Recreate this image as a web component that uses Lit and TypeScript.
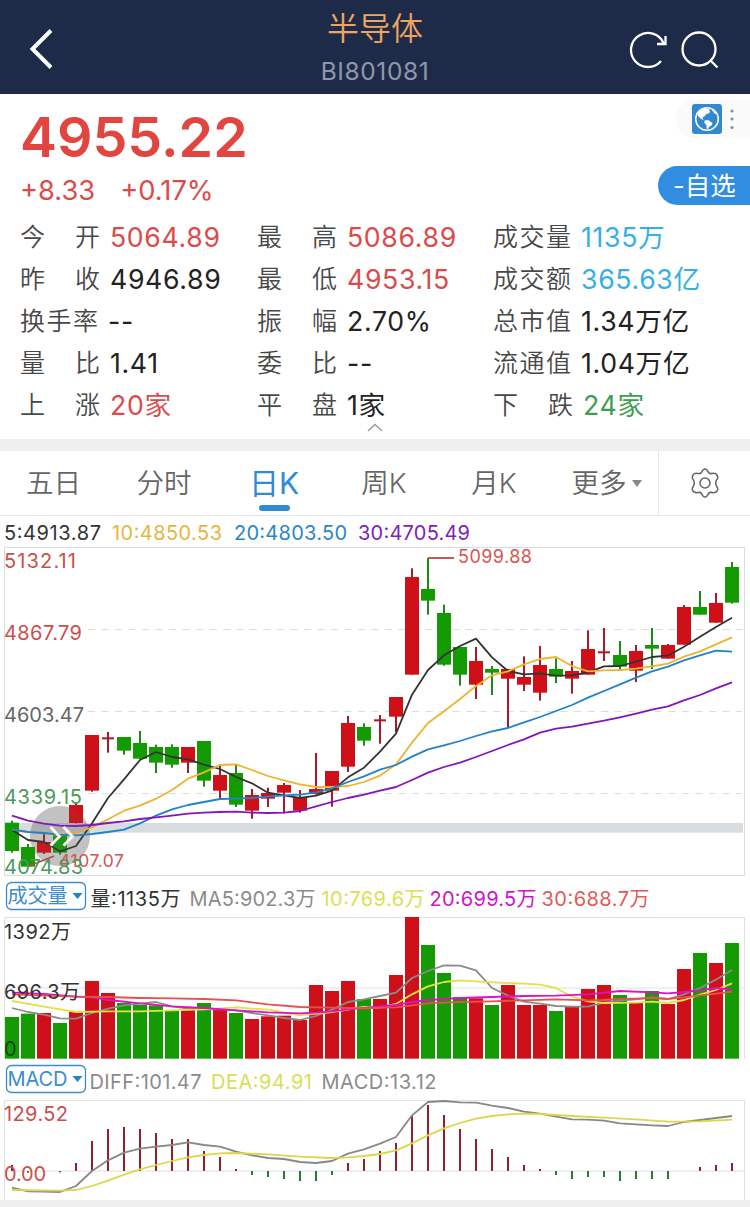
import { LitElement, html, svg, css } from "lit";
import { customElement } from "lit/decorators.js";

type Pt = [number, number];
const X = (i: number) => 12 + 16 * i;
const RED = "#d01018";
const GREEN = "#149b04";

// colour, open/close edges, high, low: thirds of a pixel from the chart top
const CANDLES: [string, number, number, number, number][] = [
  ["g", 908, 993, 902, 998], ["g", 981, 1040, 972, 1042], ["r", 966, 998, 942, 1002],
  ["g", 946, 998, 942, 1004], ["r", 855, 909, 848, 910], ["r", 645, 812, 645, 815],
  ["r", 652, 656, 636, 698], ["g", 651, 692, 651, 704], ["g", 669, 716, 633, 718],
  ["g", 681, 728, 674, 759], ["g", 681, 734, 673, 743], ["r", 681, 728, 681, 759],
  ["g", 663, 782, 663, 800], ["r", 765, 812, 733, 836], ["g", 759, 854, 735, 861],
  ["r", 825, 872, 807, 896], ["r", 819, 836, 803, 861], ["r", 795, 818, 789, 880],
  ["r", 832, 872, 810, 878], ["r", 807, 822, 699, 824], ["r", 753, 812, 753, 860],
  ["r", 609, 740, 588, 756], ["g", 621, 662, 610, 677], ["r", 598, 602, 585, 671],
  ["r", 531, 590, 531, 636], ["r", 171, 464, 145, 464], ["g", 207, 242, 114, 284],
  ["g", 279, 434, 254, 437], ["g", 381, 464, 381, 497], ["r", 423, 494, 381, 537],
  ["g", 447, 458, 438, 525], ["r", 447, 476, 447, 622], ["r", 471, 494, 409, 513],
  ["r", 435, 518, 378, 542], ["g", 447, 470, 415, 489], ["r", 453, 476, 423, 521],
  ["r", 387, 464, 331, 464], ["r", 394, 398, 324, 423], ["g", 405, 440, 363, 452],
  ["r", 393, 452, 375, 486], ["g", 375, 386, 324, 447], ["r", 375, 416, 372, 416],
  ["r", 261, 374, 255, 374], ["g", 261, 284, 213, 284], ["r", 249, 308, 219, 308],
  ["g", 141, 248, 126, 251],
];

const VOLUMES = [
  411, 401, 399, 429, 396, 303, 339, 369, 375, 376, 390, 390, 369, 386, 399, 417,
  409, 407, 420, 315, 333, 303, 357, 357, 285, 111, 195, 279, 352, 355, 375, 315,
  375, 375, 393, 378, 327, 315, 345, 366, 333, 372, 267, 219, 249, 189,
];

const MACD = [
  855, 878, 873, 877, 849, 783, 747, 741, 747, 759, 777, 777, 813, 831, 867, 885,
  891, 897, 903, 903, 885, 849, 837, 813, 789, 709, 675, 705, 747, 777, 807, 831,
  855, 867, 885, 897, 891, 891, 903, 897, 897, 897, 873, 861, 855, 849,
];

const P5: Pt[] = [[0, 930], [1, 960], [2, 966], [3, 994], [4, 978], [5, 910], [6, 834], [7, 778], [8, 720], [9, 696], [10, 711], [11, 718], [12, 734], [13, 747], [14, 771], [15, 790], [16, 818], [17, 826], [18, 834], [19, 827], [20, 812], [21, 772], [22, 743], [23, 695], [24, 641], [25, 524], [26, 450], [27, 406], [28, 378], [29, 356], [30, 412], [31, 453], [32, 463], [33, 460], [34, 467], [35, 466], [36, 457], [37, 439], [38, 438], [39, 425], [40, 411], [41, 407], [42, 380], [43, 350], [44, 321], [45, 293]];
const P10: Pt[] = [[0, 928], [1, 936], [2, 940], [3, 944], [4, 939], [5, 922], [6, 898], [7, 872], [8, 857], [9, 836], [10, 810], [11, 776], [12, 757], [13, 735], [14, 733], [15, 750], [16, 768], [17, 781], [18, 793], [19, 801], [20, 801], [21, 798], [22, 786], [23, 767], [24, 733], [25, 668], [26, 609], [27, 574], [28, 537], [29, 498], [30, 466], [31, 454], [32, 433], [33, 417], [34, 411], [35, 438], [36, 454], [37, 451], [38, 450], [39, 446], [40, 439], [41, 431], [42, 410], [43, 394], [44, 373], [45, 352]];
const P20: Pt[] = [[0, 928], [1, 936], [2, 939], [3, 944], [4, 946], [5, 942], [6, 936], [7, 929], [8, 910], [9, 887], [10, 868], [11, 855], [12, 846], [13, 837], [14, 836], [15, 834], [16, 830], [17, 826], [18, 824], [19, 817], [20, 805], [21, 786], [22, 769], [23, 749], [24, 735], [25, 710], [26, 688], [27, 676], [28, 663], [29, 648], [30, 634], [31, 624], [32, 607], [33, 591], [34, 573], [35, 555], [36, 533], [37, 513], [38, 493], [39, 473], [40, 454], [41, 440], [42, 421], [43, 406], [44, 392], [45, 395]];
const P30: Pt[] = [[0, 887], [1, 902], [2, 911], [3, 917], [4, 918], [5, 915], [6, 909], [7, 904], [8, 897], [9, 892], [10, 887], [11, 881], [12, 878], [13, 876], [14, 875], [15, 878], [16, 879], [17, 878], [18, 873], [19, 859], [20, 846], [21, 834], [22, 824], [23, 812], [24, 801], [25, 780], [26, 758], [27, 741], [28, 728], [29, 711], [30, 693], [31, 675], [32, 658], [33, 638], [34, 626], [35, 620], [36, 611], [37, 602], [38, 592], [39, 581], [40, 569], [41, 559], [42, 541], [43, 525], [44, 505], [45, 487]];

const V5: Pt[] = [[0, 384], [1, 396], [2, 404], [3, 415], [4, 416], [5, 399], [6, 386], [7, 376], [8, 371], [9, 366], [10, 379], [11, 386], [12, 388], [13, 387], [14, 391], [15, 399], [16, 406], [17, 414], [18, 420], [19, 408], [20, 389], [21, 366], [22, 358], [23, 348], [24, 338], [25, 294], [26, 273], [27, 256], [28, 257], [29, 271], [30, 324], [31, 347], [32, 365], [33, 371], [34, 378], [35, 380], [36, 380], [37, 368], [38, 362], [39, 358], [40, 352], [41, 357], [42, 343], [43, 324], [44, 299], [45, 270]];
const V10: Pt[] = [[0, 363], [2, 380], [4, 396], [6, 394], [8, 394], [10, 391], [12, 388], [14, 382], [16, 389], [18, 406], [20, 396], [22, 381], [23, 382], [24, 372], [25, 343], [26, 319], [27, 306], [28, 301], [30, 307], [32, 311], [33, 314], [34, 324], [35, 350], [36, 364], [37, 369], [39, 368], [40, 365], [41, 369], [42, 360], [43, 344], [44, 330], [45, 310]];
const V20: Pt[] = [[0, 338], [2, 342], [4, 350], [5, 352], [6, 360], [8, 370], [10, 379], [12, 384], [14, 391], [16, 397], [18, 400], [19, 398], [20, 394], [21, 388], [22, 384], [24, 375], [25, 366], [26, 360], [28, 354], [30, 351], [32, 348], [34, 347], [36, 343], [38, 333], [40, 337], [41, 340], [42, 336], [43, 331], [44, 324], [45, 330]];
const V30: Pt[] = [[0, 343], [2, 347], [4, 350], [6, 351], [8, 354], [10, 355], [12, 357], [14, 361], [16, 373], [18, 381], [20, 383], [22, 385], [24, 382], [26, 370], [28, 366], [30, 364], [32, 361], [34, 358], [36, 361], [37, 360], [38, 357], [39, 356], [40, 354], [41, 357], [42, 352], [43, 346], [44, 341], [45, 335]];

const DIFF: Pt[] = [[0, 923], [1, 934], [2, 935], [3, 936], [4, 918], [5, 873], [6, 841], [7, 818], [8, 806], [9, 800], [10, 795], [11, 787], [12, 795], [13, 800], [14, 815], [15, 826], [16, 834], [17, 837], [18, 846], [19, 849], [20, 843], [21, 821], [22, 808], [23, 791], [24, 771], [25, 706], [26, 666], [27, 663], [28, 667], [29, 668], [30, 677], [31, 684], [32, 695], [33, 701], [34, 710], [35, 718], [36, 719], [37, 722], [38, 730], [39, 733], [40, 736], [41, 738], [42, 726], [43, 720], [44, 714], [45, 708]];
const DEA: Pt[] = [[0, 930], [3, 932], [4, 930], [5, 918], [6, 902], [7, 884], [8, 868], [9, 855], [10, 843], [11, 832], [12, 825], [13, 820], [14, 819], [16, 823], [18, 830], [20, 834], [21, 832], [22, 828], [23, 822], [24, 811], [25, 790], [26, 766], [27, 745], [28, 729], [29, 716], [30, 708], [31, 703], [32, 701], [33, 702], [35, 708], [37, 713], [39, 718], [41, 725], [43, 724], [45, 719]];

const line = (pts: Pt[], color: string, w = 1.8) =>
  svg`<polyline fill="none" stroke=${color} stroke-width=${w} stroke-linejoin="round"
    points=${pts.map(([i, y]) => `${X(i)},${(y / 3).toFixed(2)}`).join(" ")} />`;

const label = (x: number, y: number, w: number, color: string, text: string, size = 20) =>
  svg`<text x=${x} y=${y} textLength=${w} fill=${color} font-size=${size}>${text}</text>`;

@customElement("app-root")
export class AppRoot extends LitElement {
  static styles = css`
    :host {
      display: flex;
      flex-direction: column;
      width: 750px;
      height: 1207px;
      overflow: hidden;
      background: #fff;
      color: #222;
      font-family: Inter, "Noto Sans CJK SC", sans-serif;
      font-size: 25px;
    }
    * { box-sizing: border-box; }
    svg { display: block; flex: none; }
    svg text { font-family: Inter, "Noto Sans CJK SC", sans-serif; font-weight: 400; }
    .header {
      display: grid;
      grid-template-columns: 1fr 140px 1fr;
      height: 94px;
      flex: none;
      background: #1d2b49;
    }
    .back { padding: 28px 0 0 28px; }
    .title { display: flex; flex-direction: column; align-items: center; padding-top: 9px; }
    .name { font-size: 32px; line-height: 40px; color: #efa45f; font-weight: 350; white-space: nowrap; }
    .code { font-size: 24.5px; line-height: 30px; margin-top: 7px; color: #8f98aa; letter-spacing: 0.6px; white-space: nowrap; }
    .tools { display: flex; justify-content: flex-end; gap: 12px; padding: 30px 31px 0 0; }
    .quote { display: flex; justify-content: space-between; height: 121px; flex: none; }
    .price { padding: 11px 0 0 20px; color: #e2453f; }
    .last { font-size: 55.5px; font-weight: 600; line-height: 64px; letter-spacing: 0; }
    .change { display: flex; gap: 25px; font-size: 27.3px; line-height: 36px; margin-top: 4px; color: #dc4b49; }
    .side { display: flex; flex-direction: column; align-items: flex-end; }
    .mini {
      display: flex; align-items: center; gap: 8px;
      width: 74px; height: 38px; margin-top: 6px; padding-left: 16px;
      border-radius: 19px 0 0 19px; background: #fafafa;
    }
    .fav {
      width: 92px; height: 39px; margin-top: 28px; padding-left: 15px;
      border-radius: 20px 0 0 20px; background: #318de0; color: #fff;
      font-size: 25.5px; line-height: 39px; white-space: nowrap; font-weight: 370;
    }
    .stats {
      display: grid;
      grid-template-columns: 237px 236px 1fr;
      grid-auto-rows: 42px;
      height: 224px;
      flex: none;
      padding: 1px 0 0 20px;
    }
    .cell { display: flex; align-items: center; white-space: nowrap; line-height: 42px; }
    .key {
      display: flex; justify-content: space-between;
      width: 80px; margin-right: 10px; color: #484848; font-weight: 350;
    }
    .key.full { width: 78px; }
    .val { font-size: 26.700px; letter-spacing: 0.65px; font-weight: 400; }
    .up { color: #dc4b49; }
    .down { color: #3f9e50; }
    .blue { color: #35b0e4; }
    .fold { grid-column: 1 / -1; display: flex; justify-content: center; height: 10px; padding-right: 21px; margin-top: -3px; }
    .gap { height: 12px; flex: none; background: #efefef; }
    .tabs { display: flex; height: 65px; flex: none; border-bottom: 1px solid #e6e6e6; color: #666; font-size: 27.600px; }
    .tab {
      display: flex; flex-direction: column; align-items: center;
      width: 110px; padding-top: 12px; line-height: 40px; white-space: nowrap; font-weight: 350;
    }
    .tab:first-child { width: 109px; padding-right: 2px; }
    .tab.on { color: #318ad2; font-size: 30px; font-weight: 400; }
    .mark { width: 31px; height: 6px; margin-top: 2px; border-radius: 3px; background: #318ad2; }
    .more { flex-direction: row; align-items: flex-start; justify-content: center; gap: 5px; width: 109px; padding-left: 6px; }
    .more svg { margin-top: 17px; }
    .gear { display: flex; flex: 1; justify-content: center; padding-top: 17px; border-left: 1px solid #e6e6e6; }
    .charts { flex: none; height: 684px; }
    .foot { height: 7px; flex: none; background: #efefef; }
  `;

  private row(k1: string, v1: string, c1: string, k2: string, v2: string, c2: string, k3: string, v3: string, c3: string) {
    const cell = (k: string, v: string, c: string) => html`
      <div class="cell">
        <span class="key ${k.length > 2 ? "full" : ""}">${[...k].map((ch) => html`<span>${ch}</span>`)}</span>
        <span class="val ${c}">${v}</span>
      </div>`;
    return html`${cell(k1, v1, c1)}${cell(k2, v2, c2)}${cell(k3, v3, c3)}`;
  }

  private priceChart() {
    return svg`
      <g transform="translate(0,4)">
        <g stroke="#dcdcdc" fill="none">
          <rect x="4.5" y="27.5" width="740" height="328" />
          <path stroke-dasharray="7 6.5" d="M88 109.5H742M88 191.5H742M88 273.5H742" />
        </g>
        <rect x="5" y="303" width="738" height="9.7" fill="#d9dcde" />
        <circle cx="60" cy="316" r="30" fill="#777" fill-opacity=".38" />
        ${CANDLES.map(([c, a, b, h, l], i) => svg`
          <rect x=${X(i) - 1} y=${h / 3} width="2" height=${(l - h) / 3} fill=${c === "r" ? "#a51c28" : "#1c8a14"} />
          <rect x=${b - a < 6 ? X(i) - 6 : X(i) - 7} y=${a / 3} width=${b - a < 6 ? 12 : 14} height=${Math.max(2, (b - a) / 3)}
            fill=${c === "r" ? (b - a < 6 ? "#a51c28" : RED) : GREEN} />`)}
        ${line(P5, "#333")}${line(P10, "#edb42f")}${line(P20, "#1f82cb")}${line(P30, "#8614bd")}
        <path d="M428 38H454" stroke="#b84a44" stroke-width="1.8" />
        <path d="M29 346L54 336" stroke="#b84a44" stroke-width="1.8" />
        <circle cx="60" cy="316" r="30" fill="#777" fill-opacity=".1" />
        <path d="M50.500 307L59.500 316.500L50.500 325.500M63.500 307L72.500 316.500L63.500 325.500" fill="none" stroke="#fff" stroke-width="2.8" />
        ${label(458, 42.5, 74, "#d6544f", "5099.88", 18)}
        ${label(59, 346.5, 65, "#d6544f", "4107.07", 17.5)}
        ${label(4, 48, 72, "#c9504c", "5132.11")}
        ${label(4, 120, 78, "#c9504c", "4867.79")}
        ${label(4, 202, 80, "#666", "4603.47")}
        ${label(4, 284, 78, "#4a9a58", "4339.15")}
        ${label(4, 354, 79, "#4a9a58", "4074.83")}
      </g>`;
  }

  private volumeChart() {
    return svg`
      <g transform="translate(0,364)">
        <path d="M4.500 179V37.500H744.500V179M5 108H744" fill="none" stroke="#e0e0e0" />
        ${VOLUMES.map((v, i) => svg`<rect x=${X(i) - 7} y=${v / 3} width="14" height=${(536 - v) / 3} fill=${CANDLES[i][0] === "r" ? RED : GREEN} />`)}
        ${line(V5, "#8b8b8b")}${line(V10, "#e6df47")}${line(V20, "#e010c8")}${line(V30, "#e85050")}
        ${label(4, 58.500, 67, "#333", "1392万")}
        ${label(4, 118.500, 76, "#333", "696.3万")}
        ${label(4, 176, 12, "#14460d", "0")}
      </g>`;
  }

  private macdChart() {
    return svg`
      <g transform="translate(0,364)">
        <path d="M4.500 320V220.500H744.500V320M5 291H744" fill="none" stroke="#e0e0e0" />
        ${MACD.map((v, i) => svg`<rect x=${X(i) - 1} y=${Math.min(v, 873) / 3} width="2" height=${Math.abs(v - 873) / 3} fill=${v < 873 ? "#8f202c" : "#287d28"} />`)}
        ${line(DIFF, "#888")}${line(DEA, "#ddd64c")}
        ${label(4, 241, 64, "#c9504c", "129.52")}
        ${label(4, 301, 42, "#c9504c", "0.00")}
      </g>`;
  }

  private picker(y: number, text: string, w: number) {
    return svg`
      <rect x="6.500" y=${y} width="79" height="27" rx="5" fill="#fff" stroke="#3c8dcc" stroke-width="1.3" />
      ${label(7.5, y + 20.500, w, "#3c8dcc", text, 20)}
      <path d="M72.500 ${y + 10.500}h10l-5 6z" fill="#2185c9" />`;
  }

  render() {
    return html`
      <div class="header">
        <div class="back">
          <svg width="26" height="42" viewBox="0 0 26 42" fill="none" stroke="#fff" stroke-width="4"><path d="M23 2.500L4.500 21L23 39.500" /></svg>
        </div>
        <div class="title"><div class="name">半导体</div><div class="code">BI801081</div></div>
        <div class="tools">
          <svg width="40" height="40" viewBox="0 0 40 40" fill="none" stroke="#fff" stroke-width="2.3">
            <path d="M32 31A17 17 0 1 1 34.500 13M36.500 6V14H28" />
          </svg>
          <svg width="38" height="40" viewBox="0 0 38 40" fill="none" stroke="#fff" stroke-width="2.3">
            <circle cx="18" cy="19" r="16.500" /><path d="M29.500 30.500L36.500 37.500" />
          </svg>
        </div>
      </div>
      <div class="quote">
        <div class="price">
          <div class="last">4955.22</div>
          <div class="change"><span>+8.33</span><span>+0.17%</span></div>
        </div>
        <div class="side">
          <div class="mini">
            <svg width="30" height="30" viewBox="0 0 30 30">
              <rect width="30" height="30" rx="3" fill="#3389d0" />
              <circle cx="15" cy="15" r="11.300" fill="none" stroke="#fff" stroke-width="1.500" />
              <path d="M5.500 10Q8 5 13 4.500L17 5L18 8L16 10L14.500 9.500L13 12L10.500 13.500L11.500 16L8.500 14.500L6 12ZM12.500 16.500L16 16L20.500 19L19.500 21.500L17.500 22.500L16 25L14.500 24.500L14.500 21L12.500 19ZM19.500 5.500Q22.500 6.500 24.500 10L22.500 9.500Z" fill="#fff" />
            </svg>
            <svg width="4" height="22" viewBox="0 0 4 22" fill="#8b8f96"><circle cx="2" cy="3" r="1.600" /><circle cx="2" cy="11" r="1.600" /><circle cx="2" cy="19.500" r="1.600" /></svg>
          </div>
          <div class="fav">-自选</div>
        </div>
      </div>
      <div class="stats">
        ${this.row("今开", "5064.89", "up", "最高", "5086.89", "up", "成交量", "1135万", "blue")}
        ${this.row("昨收", "4946.89", "", "最低", "4953.15", "up", "成交额", "365.63亿", "blue")}
        ${this.row("换手率", "--", "", "振幅", "2.70%", "", "总市值", "1.34万亿", "")}
        ${this.row("量比", "1.41", "", "委比", "--", "", "流通值", "1.04万亿", "")}
        ${this.row("上涨", "20家", "up", "平盘", "1家", "", "下跌", "24家", "down")}
        <div class="fold"><svg width="16" height="9" viewBox="0 0 16 9" fill="none" stroke="#999" stroke-width="1.400"><path d="M1 8L8 1.500L15 8" /></svg></div>
      </div>
      <div class="gap"></div>
      <div class="tabs">
        <div class="tab">五日</div>
        <div class="tab">分时</div>
        <div class="tab on">日K<div class="mark"></div></div>
        <div class="tab">周K</div>
        <div class="tab">月K</div>
        <div class="tab more">更多<svg width="10" height="7" viewBox="0 0 10 7" fill="#888"><path d="M0 0H10L5 7Z" /></svg></div>
        <div class="gear">
          <svg width="30" height="30" viewBox="0 0 30 30" fill="none" stroke="#666" stroke-width="1.500">
            <circle cx="15" cy="15" r="5" />
            <path d="M11.500 4.500Q13 1 15 1Q17 1 18.500 4.500Q19.500 6 22 5.500Q25.500 4.800 27 7Q28.700 9.500 26.500 12Q24.800 15 26.500 18Q28.700 20.500 27 23Q25.500 25.200 22 24.500Q19.500 24 18.500 25.500Q17 29 15 29Q13 29 11.500 25.500Q10.500 24 8 24.500Q4.500 25.200 3 23Q1.300 20.500 3.500 18Q5.200 15 3.500 12Q1.300 9.500 3 7Q4.500 4.800 8 5.500Q10.500 6 11.500 4.500Z" />
          </svg>
        </div>
      </div>
      <div class="charts">
        <svg width="750" height="684" viewBox="0 0 750 684">
          ${label(4, 24, 97, "#333", "5:4913.87")}
          ${label(112, 24, 110, "#e8b53c", "10:4850.53")}
          ${label(234, 24, 113, "#2b86c9", "20:4803.50")}
          ${label(358, 24, 112, "#7f22b5", "30:4705.49")}
          ${this.priceChart()}
          ${this.picker(366.5, "成交量", 60)}
          ${label(90.5, 390, 90, "#333", "量:1135万")}
          ${label(189.5, 390, 126, "#8b8b8b", "MA5:902.3万")}
          ${label(321.5, 390, 103, "#dadf52", "10:769.6万")}
          ${label(429.5, 390, 107, "#cc14cc", "20:699.5万")}
          ${label(541.5, 390, 108, "#df5a58", "30:688.7万")}
          ${this.volumeChart()}
          ${this.picker(549.5, "MACD", 60)}
          ${label(89.5, 573, 112, "#8b8b8b", "DIFF:101.47")}
          ${label(211, 573, 101, "#d6df57", "DEA:94.91")}
          ${label(321.5, 573, 115, "#8b8b8b", "MACD:13.12")}
          ${this.macdChart()}
        </svg>
      </div>
      <div class="foot"></div>
    `;
  }
}
